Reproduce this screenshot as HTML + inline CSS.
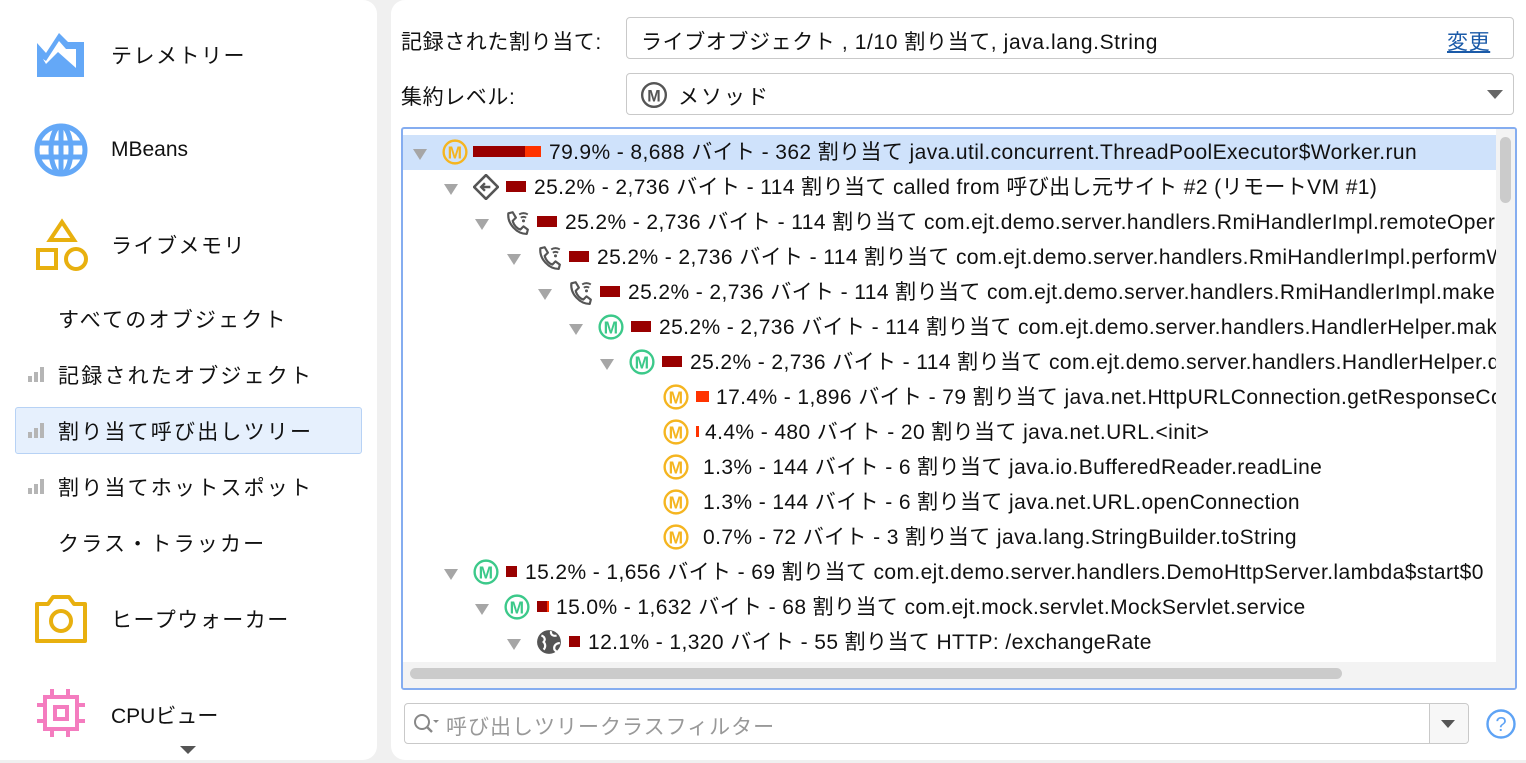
<!DOCTYPE html>
<html><head><meta charset="utf-8">
<style>
*{margin:0;padding:0;box-sizing:border-box}
body{width:1526px;height:763px;background:#f0f0f0;font-family:"Liberation Sans","Noto Sans CJK JP",sans-serif;color:#111;position:relative;overflow:hidden}
.abs{position:absolute}
#left{left:0;top:0;width:377px;height:760px;background:#fff;border-radius:0 14px 14px 0}
#right{left:391px;top:0;width:1135px;height:760px;background:#fff;border-radius:14px 0 0 14px}
.nav{position:absolute;font-size:21px;white-space:nowrap}
.sub{position:absolute;font-size:21px;left:58px;white-space:nowrap;letter-spacing:2.2px}
.bars{position:absolute;left:28px;width:18px;height:16px}
.lbl{position:absolute;font-size:21px;white-space:nowrap;letter-spacing:0.6px}
.box{position:absolute;border:1.5px solid #c9c9c9;border-radius:4px;background:#fff}
#tree{left:401px;top:127px;width:1116px;height:563px;border:2px solid #85adf0;border-radius:3px;overflow:hidden;background:#fff}
.row{position:absolute;height:35px;line-height:36px;font-size:21px;letter-spacing:0.4px;white-space:nowrap;left:0;right:0}
.row .in{position:absolute;top:0;height:35px}
.tri{position:absolute;top:14px;left:0;width:0;height:0;border-left:7px solid transparent;border-right:7px solid transparent;border-top:11px solid #a6a6a6}
.ic{position:absolute;top:4px;left:29px;width:26px;height:26px}
.txt{position:absolute;top:0}
.bar{position:absolute;top:11px;height:11px}
</style></head><body>
<div id="left" class="abs">
 <svg class="abs" style="left:36px;top:31px" width="50" height="47" viewBox="0 0 50 47"><path d="M1 12 L10 22 L23 2 L32 11 L48 11 L48 46 L1 46 Z" fill="#64a8f7"/><path d="M7 28 L10 33 L22 21 L40 37 L40 18 L30 18 L23 10 L10 30 Z" fill="#fff"/></svg>
 <div class="nav" style="left:111px;top:40px;letter-spacing:1.5px">テレメトリー</div>
 <svg class="abs" style="left:34px;top:123px" width="54" height="54" viewBox="0 0 54 54"><g fill="none" stroke="#64a8f7" stroke-width="5"><circle cx="27" cy="27" r="24"/><ellipse cx="27" cy="27" rx="10" ry="24"/><line x1="3" y1="20" x2="51" y2="20"/><line x1="3" y1="34" x2="51" y2="34"/><line x1="27" y1="3" x2="27" y2="51"/></g></svg>
 <div class="nav" style="left:111px;top:138px">MBeans</div>
 <svg class="abs" style="left:36px;top:218px" width="52" height="54" viewBox="0 0 52 54"><g fill="none" stroke="#e8b00f" stroke-width="4"><path d="M26 4 L38 22 L14 22 Z"/><rect x="2" y="32" width="18" height="18"/><circle cx="40" cy="41" r="10"/></g></svg>
 <div class="nav" style="left:111px;top:230px;letter-spacing:1.5px">ライブメモリ</div>
 <div class="sub" style="top:304px">すべてのオブジェクト</div>
 <svg class="bars" style="top:366px" viewBox="0 0 18 16"><rect x="0" y="10" width="4" height="6" fill="#b5b5b5"/><rect x="6" y="6" width="4" height="10" fill="#b5b5b5"/><rect x="12" y="1" width="4" height="15" fill="#b5b5b5"/></svg>
 <div class="sub" style="top:360px">記録されたオブジェクト</div>
 <div class="abs" style="left:15px;top:407px;width:347px;height:47px;background:#e6f0fd;border:1.5px solid #b7d2f5;border-radius:3px"></div>
 <svg class="bars" style="top:422px" viewBox="0 0 18 16"><rect x="0" y="10" width="4" height="6" fill="#b5b5b5"/><rect x="6" y="6" width="4" height="10" fill="#b5b5b5"/><rect x="12" y="1" width="4" height="15" fill="#b5b5b5"/></svg>
 <div class="sub" style="top:416px">割り当て呼び出しツリー</div>
 <svg class="bars" style="top:478px" viewBox="0 0 18 16"><rect x="0" y="10" width="4" height="6" fill="#b5b5b5"/><rect x="6" y="6" width="4" height="10" fill="#b5b5b5"/><rect x="12" y="1" width="4" height="15" fill="#b5b5b5"/></svg>
 <div class="sub" style="top:472px">割り当てホットスポット</div>
 <div class="sub" style="top:528px">クラス・トラッカー</div>
 <svg class="abs" style="left:34px;top:594px" width="54" height="50" viewBox="0 0 54 50"><g fill="none" stroke="#e8b00f" stroke-width="4"><path d="M3 10 L14 10 L19 3 L35 3 L40 10 L51 10 L51 47 L3 47 Z" stroke-linejoin="round"/><circle cx="27" cy="27" r="10"/></g></svg>
 <div class="nav" style="left:111px;top:604px;letter-spacing:1.5px">ヒープウォーカー</div>
 <svg class="abs" style="left:36px;top:689px" width="50" height="48" viewBox="0 0 50 48"><g fill="#f47cbf"><rect x="9" y="8" width="32" height="32" fill="none" stroke="#f47cbf" stroke-width="4"/><rect x="19" y="18" width="12" height="12" fill="none" stroke="#f47cbf" stroke-width="4"/><rect x="14" y="0" width="4" height="8"/><rect x="30" y="0" width="4" height="8"/><rect x="14" y="40" width="4" height="8"/><rect x="30" y="40" width="4" height="8"/><rect x="1" y="14" width="8" height="4"/><rect x="1" y="30" width="8" height="4"/><rect x="41" y="14" width="8" height="4"/><rect x="41" y="30" width="8" height="4"/></g></svg>
 <div class="nav" style="left:111px;top:700px">CPUビュー</div>
 <div class="abs" style="left:180px;top:746px;border-left:8px solid transparent;border-right:8px solid transparent;border-top:8px solid #555"></div>
</div>
<div id="right" class="abs"></div>
<div class="lbl" style="left:401px;top:26px">記録された割り当て:</div>
<div class="box" style="left:626px;top:17px;width:888px;height:42px"></div>
<div class="lbl" style="left:641px;top:26px">ライブオブジェクト , 1/10 割り当て, java.lang.String</div>
<div class="lbl" style="left:1447px;top:26px;color:#1a5aa8;text-decoration:underline">変更</div>
<div class="lbl" style="left:401px;top:81px">集約レベル:</div>
<div class="box" style="left:626px;top:73px;width:888px;height:42px"></div>
<svg class="abs" style="left:640px;top:81px" width="28" height="28" viewBox="0 0 26 26"><circle cx="13" cy="13" r="11" fill="none" stroke="#555" stroke-width="2.2"/><text x="13" y="19" text-anchor="middle" font-family="Liberation Sans" font-weight="bold" font-size="15" fill="#555">M</text></svg>
<div class="lbl" style="left:678px;top:81px;letter-spacing:2px">メソッド</div>
<div class="abs" style="left:1487px;top:90px;border-left:8px solid transparent;border-right:8px solid transparent;border-top:9px solid #666"></div>

<svg width="0" height="0" style="position:absolute"><defs>
<g id="mo"><circle cx="12" cy="12" r="10.5" fill="none" stroke="#f5b520" stroke-width="2.2"/><text x="12" y="18" text-anchor="middle" font-family="Liberation Sans" font-weight="bold" font-size="16" fill="#f5b520">M</text></g>
<g id="mg"><circle cx="12" cy="12" r="10.5" fill="none" stroke="#3cc98a" stroke-width="2.2"/><text x="12" y="18" text-anchor="middle" font-family="Liberation Sans" font-weight="bold" font-size="16" fill="#3cc98a">M</text></g>
<g id="ph"><path d="M4 4 L8 3 L11 8 L8 11 C9 15 12 18 15 19 L18 16 L22 19 L21 23 C12 23 3 14 4 4 Z" fill="none" stroke="#555" stroke-width="2" stroke-linejoin="round"/><path d="M14 5 A8 8 0 0 1 22 5 M15.5 8 A5 5 0 0 1 20.5 8" fill="none" stroke="#555" stroke-width="1.8"/><circle cx="18" cy="11" r="1.4" fill="#555"/></g>
<g id="dm"><path d="M12 1 L23 12 L12 23 L1 12 Z" fill="none" stroke="#555" stroke-width="2.4" stroke-linejoin="round"/><path d="M16 12 L8 12 M11 8.5 L7.5 12 L11 15.5" fill="none" stroke="#555" stroke-width="2.2"/></g>
<g id="gl"><circle cx="12" cy="12" r="11" fill="#555"/><path d="M5 6 C8 7 9 10 7 12 C9 14 9 17 7 19 M14 2 C13 5 16 7 19 6 M22 13 C19 13 16 15 17 19 L19 21" fill="none" stroke="#fff" stroke-width="2"/></g>
</defs></svg>

<div id="tree" class="abs">
 <div class="abs" style="left:0;top:6px;width:1093px;height:35px;background:#cfe2fb"></div>
 <div class="row" style="top:6px"><div class="in" style="left:10px"><div class="tri"></div><svg class="ic" viewBox="0 0 24 24"><use href="#mo"/></svg><div class="bar" style="left:60px;width:52px;background:#990000"></div><div class="bar" style="left:112px;width:16px;background:#ff3300"></div><span class="txt" style="left:136px">79.9% - 8,688 バイト - 362 割り当て java.util.concurrent.ThreadPoolExecutor$Worker.run</span></div></div>
 <div class="row" style="top:41px"><div class="in" style="left:41px"><div class="tri"></div><svg class="ic" viewBox="0 0 24 24"><use href="#dm"/></svg><div class="bar" style="left:62px;width:20px;background:#990000"></div><span class="txt" style="left:90px">25.2% - 2,736 バイト - 114 割り当て called from 呼び出し元サイト #2 (リモートVM #1)</span></div></div>
 <div class="row" style="top:76px"><div class="in" style="left:72px"><div class="tri"></div><svg class="ic" viewBox="0 0 24 24"><use href="#ph"/></svg><div class="bar" style="left:62px;width:20px;background:#990000"></div><span class="txt" style="left:90px">25.2% - 2,736 バイト - 114 割り当て com.ejt.demo.server.handlers.RmiHandlerImpl.remoteOperation</span></div></div>
 <div class="row" style="top:111px"><div class="in" style="left:104px"><div class="tri"></div><svg class="ic" viewBox="0 0 24 24"><use href="#ph"/></svg><div class="bar" style="left:62px;width:20px;background:#990000"></div><span class="txt" style="left:90px">25.2% - 2,736 バイト - 114 割り当て com.ejt.demo.server.handlers.RmiHandlerImpl.performWork</span></div></div>
 <div class="row" style="top:146px"><div class="in" style="left:135px"><div class="tri"></div><svg class="ic" viewBox="0 0 24 24"><use href="#ph"/></svg><div class="bar" style="left:62px;width:20px;background:#990000"></div><span class="txt" style="left:90px">25.2% - 2,736 バイト - 114 割り当て com.ejt.demo.server.handlers.RmiHandlerImpl.makeRequest</span></div></div>
 <div class="row" style="top:181px"><div class="in" style="left:166px"><div class="tri"></div><svg class="ic" viewBox="0 0 24 24"><use href="#mg"/></svg><div class="bar" style="left:62px;width:20px;background:#990000"></div><span class="txt" style="left:90px">25.2% - 2,736 バイト - 114 割り当て com.ejt.demo.server.handlers.HandlerHelper.makeRequest</span></div></div>
 <div class="row" style="top:216px"><div class="in" style="left:197px"><div class="tri"></div><svg class="ic" viewBox="0 0 24 24"><use href="#mg"/></svg><div class="bar" style="left:62px;width:20px;background:#990000"></div><span class="txt" style="left:90px">25.2% - 2,736 バイト - 114 割り当て com.ejt.demo.server.handlers.HandlerHelper.doRequest</span></div></div>
 <div class="row" style="top:251px"><div class="in" style="left:231px"><svg class="ic" viewBox="0 0 24 24"><use href="#mo"/></svg><div class="bar" style="left:62px;width:13px;background:#ff3300"></div><span class="txt" style="left:82px">17.4% - 1,896 バイト - 79 割り当て java.net.HttpURLConnection.getResponseCode</span></div></div>
 <div class="row" style="top:286px"><div class="in" style="left:231px"><svg class="ic" viewBox="0 0 24 24"><use href="#mo"/></svg><div class="bar" style="left:62px;width:3px;background:#ff3300"></div><span class="txt" style="left:71px">4.4% - 480 バイト - 20 割り当て java.net.URL.&lt;init&gt;</span></div></div>
 <div class="row" style="top:321px"><div class="in" style="left:231px"><svg class="ic" viewBox="0 0 24 24"><use href="#mo"/></svg><span class="txt" style="left:69px">1.3% - 144 バイト - 6 割り当て java.io.BufferedReader.readLine</span></div></div>
 <div class="row" style="top:356px"><div class="in" style="left:231px"><svg class="ic" viewBox="0 0 24 24"><use href="#mo"/></svg><span class="txt" style="left:69px">1.3% - 144 バイト - 6 割り当て java.net.URL.openConnection</span></div></div>
 <div class="row" style="top:391px"><div class="in" style="left:231px"><svg class="ic" viewBox="0 0 24 24"><use href="#mo"/></svg><span class="txt" style="left:69px">0.7% - 72 バイト - 3 割り当て java.lang.StringBuilder.toString</span></div></div>
 <div class="row" style="top:426px"><div class="in" style="left:41px"><div class="tri"></div><svg class="ic" viewBox="0 0 24 24"><use href="#mg"/></svg><div class="bar" style="left:62px;width:11px;background:#990000"></div><span class="txt" style="left:81px">15.2% - 1,656 バイト - 69 割り当て com.ejt.demo.server.handlers.DemoHttpServer.lambda$start$0</span></div></div>
 <div class="row" style="top:461px"><div class="in" style="left:72px"><div class="tri"></div><svg class="ic" viewBox="0 0 24 24"><use href="#mg"/></svg><div class="bar" style="left:62px;width:10px;background:#990000"></div><div class="bar" style="left:72px;width:2px;background:#ff3300"></div><span class="txt" style="left:81px">15.0% - 1,632 バイト - 68 割り当て com.ejt.mock.servlet.MockServlet.service</span></div></div>
 <div class="row" style="top:496px"><div class="in" style="left:104px"><div class="tri"></div><svg class="ic" viewBox="0 0 24 24"><use href="#gl"/></svg><div class="bar" style="left:62px;width:11px;background:#990000"></div><span class="txt" style="left:81px">12.1% - 1,320 バイト - 55 割り当て HTTP: /exchangeRate</span></div></div>
 <div class="abs" style="left:0;top:533px;width:1116px;height:30px;background:#f3f3f3"></div>
 <div class="abs" style="left:7px;top:539px;width:932px;height:11px;background:#cbcbcb;border-radius:6px"></div>
 <div class="abs" style="left:1093px;top:0;width:21px;height:540px;background:#f3f3f3"></div>
 <div class="abs" style="left:1097px;top:8px;width:11px;height:66px;background:#cbcbcb;border-radius:6px"></div>
</div>

<div class="box" style="left:404px;top:703px;width:1065px;height:41px"></div>
<div class="abs" style="left:1429px;top:704px;width:39px;height:39px;background:#f7f7f7;border-left:1.5px solid #c9c9c9;border-radius:0 4px 4px 0"></div>
<div class="abs" style="left:1441px;top:720px;border-left:7px solid transparent;border-right:7px solid transparent;border-top:8px solid #555"></div>
<svg class="abs" style="left:412px;top:712px" width="30" height="24" viewBox="0 0 30 24"><circle cx="10" cy="10" r="7" fill="none" stroke="#888" stroke-width="2"/><line x1="15" y1="15" x2="20" y2="20" stroke="#888" stroke-width="2.4"/><path d="M21 8 L27 8 L24 11 Z" fill="#888"/></svg>
<div class="lbl" style="left:446px;top:711px;color:#999;letter-spacing:1px">呼び出しツリークラスフィルター</div>
<svg class="abs" style="left:1485px;top:708px" width="32" height="32" viewBox="0 0 32 32"><circle cx="16" cy="16" r="13.5" fill="none" stroke="#5ea3f5" stroke-width="2.4"/><text x="16" y="23" text-anchor="middle" font-family="Liberation Sans" font-size="20" fill="#5ea3f5">?</text></svg>
</body></html>
